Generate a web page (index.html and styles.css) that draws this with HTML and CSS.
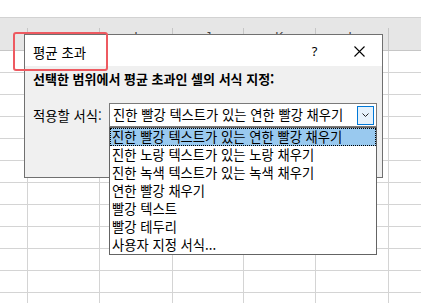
FILE: index.html
```html
<!DOCTYPE html>
<html lang="ko">
<head>
<meta charset="utf-8">
<title>평균 초과</title>
<link rel="stylesheet" href="styles.css">
</head>
<body>
<div class="app">
  <div class="topbar"></div>
  <div class="colhead">
    <div class="hrow">
      <div class="hcell w0"></div>
      <div class="hcell w1"></div>
      <div class="hcell w2">I</div>
      <div class="hcell w3">J</div>
      <div class="hcell w4">K</div>
      <div class="hcell w5">L</div>
      <div class="hcell last"></div>
    </div>
  </div>
  <div class="grid">
    <div class="gcol w0"></div>
    <div class="gcol w1"></div>
    <div class="gcol w2"></div>
    <div class="gcol w3"></div>
    <div class="gcol w4"></div>
    <div class="gcol w5"></div>
    <div class="gcol last"></div>
  </div>

  <div class="dialog">
    <div class="titlebar">
      <div class="title">평균 초과</div>
      <div class="tbtn help">?</div>
      <div class="tbtn close">
        <svg width="11" height="11" viewBox="0 0 11 11"><path d="M0.5 0.5 L10.5 10.5 M10.5 0.5 L0.5 10.5" stroke="#000" stroke-width="1.1" fill="none"/></svg>
      </div>
    </div>
    <div class="dbody">
      <div class="prompt">선택한 범위에서 평균 초과인 셀의 서식 지정:</div>
      <div class="row">
        <div class="label">적용할 서식:</div>
        <div class="combo">
          <div class="combo-text">진한 빨강 텍스트가 있는 연한 빨강 채우기</div>
          <div class="dropbtn">
            <svg width="7" height="4" viewBox="0 0 7 4"><path d="M0.5 0.5 L3.5 3.5 L6.5 0.5" stroke="#222" stroke-width="1" fill="none"/></svg>
          </div>
          <ul class="listbox">
            <li class="item selected">진한 빨강 텍스트가 있는 연한 빨강 채우기</li>
            <li class="item">진한 노랑 텍스트가 있는 노랑 채우기</li>
            <li class="item">진한 녹색 텍스트가 있는 녹색 채우기</li>
            <li class="item">연한 빨강 채우기</li>
            <li class="item">빨강 텍스트</li>
            <li class="item">빨강 테두리</li>
            <li class="item">사용자 지정 서식...</li>
          </ul>
        </div>
      </div>
    </div>
  </div>

  <div class="annot"></div>
</div>
</body>
</html>
```

FILE: styles.css
```css
html, body {
  margin: 0;
  padding: 0;
  width: 421px;
  height: 303px;
  overflow: hidden;
  background: #fff;
}

.app {
  position: relative;
  width: 421px;
  height: 303px;
  display: flex;
  flex-direction: column;
  overflow: hidden;
  font-family: "Noto Sans CJK KR", "Noto Sans", sans-serif;
}

.topbar {
  height: 17px;
  flex: none;
  background: #fff;
  border-bottom: 1px solid #d2d2d2;
}

.colhead {
  flex: none;
  background: #e6e6e6;
  padding-top: 10px;
  border-bottom: 1px solid #c6c6c6;
}

.hrow {
  display: flex;
}

.hcell {
  flex: none;
  box-sizing: border-box;
  height: 22px;
  line-height: 19px;
  text-align: center;
  border-right: 1px solid #c6c6c6;
  font-family: "Liberation Sans", Arial, sans-serif;
  font-size: 12.5px;
  color: #444;
}

.w0 { width: 28px; }
.w1 { width: 72px; }
.w2 { width: 73px; }
.w3 { width: 71px; }
.w4 { width: 72px; }
.w5 { width: 73px; }

.hcell.last,
.gcol.last {
  flex: 1 1 0;
  min-width: 0;
  border-right: none;
}

.grid {
  flex: 1;
  display: flex;
  background: repeating-linear-gradient(to bottom, transparent 0 21px, #d4d4d4 21px 22px);
}

.gcol {
  flex: none;
  box-sizing: border-box;
  border-right: 1px solid #d4d4d4;
}

/* dialog window floating over the sheet */
.dialog {
  position: absolute;
  left: 24px;
  top: 34px;
  width: 359px;
  height: 144px;
  box-sizing: border-box;
  border: 1px solid #707070;
  display: flex;
  flex-direction: column;
  background: #f0f0f0;
}

.titlebar {
  flex: none;
  height: 31px;
  background: #fff;
  display: flex;
  align-items: center;
}

.title {
  flex: 1;
  padding-left: 8px;
  padding-top: 2px;
  font-size: 13.4px;
  color: #000;
  white-space: nowrap;
}

.tbtn {
  flex: none;
  width: 45px;
  height: 31px;
  display: flex;
  align-items: center;
  justify-content: center;
}

.help {
  font-family: "Noto Sans", sans-serif;
  font-size: 13px;
  color: #000;
  padding-top: 1px;
  box-sizing: border-box;
}

.close svg {
  display: block;
  margin-top: 1px;
}

.dbody {
  flex: 1;
  padding: 5px 8px 0 8px;
}

.prompt {
  font-size: 13px;
  font-weight: 700;
  line-height: 16px;
  color: #000;
  white-space: nowrap;
}

.row {
  margin-top: 16px;
  display: flex;
  align-items: center;
  height: 24px;
}

.label {
  flex: none;
  width: 76px;
  font-size: 13.3px;
  color: #000;
  white-space: nowrap;
}

.combo {
  position: relative;
  flex: none;
  width: 268px;
  height: 24px;
  box-sizing: border-box;
  border: 1px solid #7a7a7a;
  background: #fff;
  display: flex;
  align-items: center;
}

.combo-text {
  flex: 1;
  padding-left: 3px;
  font-size: 13.3px;
  line-height: 18px;
  color: #000;
  white-space: nowrap;
}

.dropbtn {
  flex: none;
  width: 17px;
  height: 19px;
  margin-right: 2px;
  box-sizing: border-box;
  border: 1px solid #0078d7;
  background: #e5f1fb;
  display: flex;
  align-items: center;
  justify-content: center;
}

.dropbtn svg {
  display: block;
}

/* open dropdown list overlays the dialog */
.listbox {
  position: absolute;
  left: -1px;
  top: 23px;
  width: 268px;
  height: 128px;
  box-sizing: border-box;
  margin: 0;
  padding: 0;
  list-style: none;
  background: #fff;
  border: 1px solid #646464;
  z-index: 2;
}

.item {
  height: 18px;
  line-height: 18px;
  padding-left: 2px;
  font-size: 13.3px;
  color: #000;
  white-space: nowrap;
}

.item.selected {
  background: #99c9ef;
  outline: 1px dotted #000;
  outline-offset: -1px;
}

/* red annotation highlight */
.annot {
  position: absolute;
  left: 13px;
  top: 32px;
  width: 95px;
  height: 39px;
  box-sizing: border-box;
  border: 2px solid #ee5a61;
  border-radius: 3px;
  z-index: 3;
}
```
